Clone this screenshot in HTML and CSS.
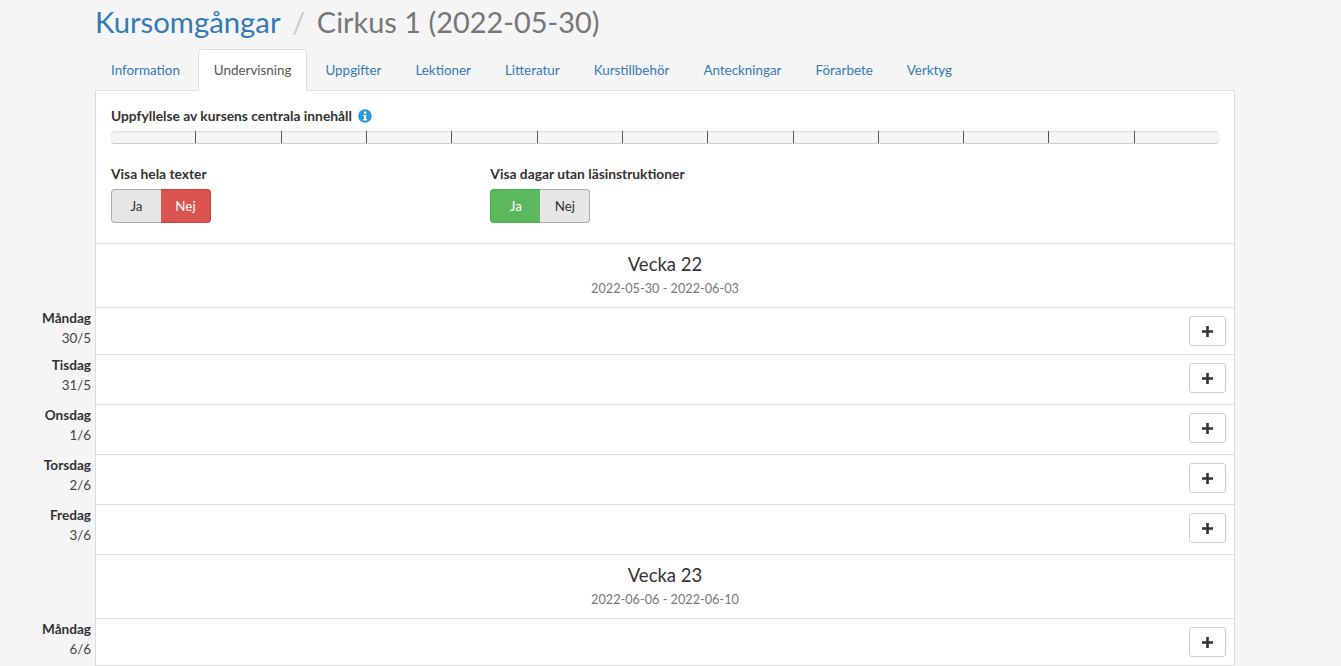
FILE: index.html
```html
<!DOCTYPE html>
<html lang="sv">
<head>
<meta charset="utf-8">
<title>Cirkus 1</title>
<link rel="stylesheet" href="styles.css">
</head>
<body>
<div class="page">
  <h1 class="title"><a href="#">Kursomgångar</a><span class="sep">/</span><span class="sub">Cirkus 1 (2022-05-30)</span></h1>
  <ul class="tabs">
    <li><a href="#">Information</a></li>
    <li class="active"><a href="#">Undervisning</a></li>
    <li><a href="#">Uppgifter</a></li>
    <li><a href="#">Lektioner</a></li>
    <li><a href="#">Litteratur</a></li>
    <li><a href="#">Kurstillbehör</a></li>
    <li><a href="#">Anteckningar</a></li>
    <li><a href="#">Förarbete</a></li>
    <li><a href="#">Verktyg</a></li>
  </ul>
  <section class="panel">
    <div class="label-line">
      <strong>Uppfyllelse av kursens centrala innehåll</strong>
      <svg class="info" viewBox="0 0 14 14" width="14" height="14" aria-hidden="true"><circle cx="7" cy="7" r="6.8" fill="#2b9bd3"/><rect x="5.9" y="2.6" width="2.3" height="2.1" rx=".4" fill="#fff"/><path d="M5.2 5.9h3v4.2h.8v1.3H5.2v-1.3H6V7.2h-.8z" fill="#fff"/></svg>
    </div>
    <div class="progress"><i></i><i></i><i></i><i></i><i></i><i></i><i></i><i></i><i></i><i></i><i></i><i></i><i></i></div>
    <div class="options">
      <div>
        <div class="opt-label">Visa hela texter</div>
        <div class="toggle"><span class="tbtn">Ja</span><span class="tbtn red">Nej</span></div>
      </div>
      <div>
        <div class="opt-label">Visa dagar utan läsinstruktioner</div>
        <div class="toggle"><span class="tbtn green">Ja</span><span class="tbtn">Nej</span></div>
      </div>
    </div>
  </section>
  <div class="week"><h2>Vecka 22</h2><small>2022-05-30 - 2022-06-03</small></div>
  <div class="day first"><div class="dlabel"><b>Måndag</b><span>30/5</span></div><div class="cell"><button class="add"><svg viewBox="0 0 11 11" width="11" height="11" aria-hidden="true"><path d="M4.2 0h2.6v4.2H11v2.6H6.8V11H4.2V6.8H0V4.2h4.2z"/></svg></button></div></div>
  <div class="day"><div class="dlabel"><b>Tisdag</b><span>31/5</span></div><div class="cell"><button class="add"><svg viewBox="0 0 11 11" width="11" height="11" aria-hidden="true"><path d="M4.2 0h2.6v4.2H11v2.6H6.8V11H4.2V6.8H0V4.2h4.2z"/></svg></button></div></div>
  <div class="day"><div class="dlabel"><b>Onsdag</b><span>1/6</span></div><div class="cell"><button class="add"><svg viewBox="0 0 11 11" width="11" height="11" aria-hidden="true"><path d="M4.2 0h2.6v4.2H11v2.6H6.8V11H4.2V6.8H0V4.2h4.2z"/></svg></button></div></div>
  <div class="day"><div class="dlabel"><b>Torsdag</b><span>2/6</span></div><div class="cell"><button class="add"><svg viewBox="0 0 11 11" width="11" height="11" aria-hidden="true"><path d="M4.2 0h2.6v4.2H11v2.6H6.8V11H4.2V6.8H0V4.2h4.2z"/></svg></button></div></div>
  <div class="day"><div class="dlabel"><b>Fredag</b><span>3/6</span></div><div class="cell"><button class="add"><svg viewBox="0 0 11 11" width="11" height="11" aria-hidden="true"><path d="M4.2 0h2.6v4.2H11v2.6H6.8V11H4.2V6.8H0V4.2h4.2z"/></svg></button></div></div>
  <div class="week"><h2>Vecka 23</h2><small>2022-06-06 - 2022-06-10</small></div>
  <div class="day first"><div class="dlabel"><b>Måndag</b><span>6/6</span></div><div class="cell"><button class="add"><svg viewBox="0 0 11 11" width="11" height="11" aria-hidden="true"><path d="M4.2 0h2.6v4.2H11v2.6H6.8V11H4.2V6.8H0V4.2h4.2z"/></svg></button></div></div>
</div>
</body>
</html>
```
FILE: styles.css
```css
* { box-sizing: border-box; }
html, body { height: 666px; overflow: hidden; }
body {
  margin: 0;
  background: #f5f5f5;
  color: #333;
  font-family: Lato, "Noto Sans", sans-serif;
  font-size: 13.4px;
  line-height: 20px;
}
.page { width: 1235px; padding-left: 95px; }
.title {
  margin: 0;
  height: 49px;
  padding-top: 2px;
  font-size: 29.3px;
  line-height: 40px;
  font-weight: 400;
  color: #777;
}
.title a { color: #337ab7; text-decoration: none; }
.sep { color: #ccc; padding: 0 11.5px; }
.sub { font-size: 28.9px; }
.tabs {
  display: flex;
  list-style: none;
  margin: 0;
  padding: 0;
  height: 42px;
  position: relative;
  z-index: 1;
}
.tabs a {
  display: block;
  height: 42px;
  padding: 10px 15px;
  color: #337ab7;
  text-decoration: none;
  border: 1px solid transparent;
  border-radius: 4px 4px 0 0;
}
.tabs li { margin-right: 2px; }
.tabs .active a { background: #fff; color: #555; border-color: #ddd #ddd #fff; }
.panel {
  background: #fff;
  border: 1px solid #ddd;
  height: 154px;
  padding: 15px;
  margin-top: -1px;
}
.label-line { display: flex; align-items: center; gap: 6px; height: 20px; }
.label-line strong, .opt-label { font-weight: 700; color: #333; font-size: 13.8px; }
.progress {
  display: flex;
  height: 13px;
  margin-top: 5px;
  background: #f5f5f5;
  border-radius: 4px;
  box-shadow: inset 0 1px 2px rgba(0,0,0,.1);
  border-bottom: 1px solid #ccc;
}
.progress i { flex: 1; border-left: 1px solid #555; }
.progress i:first-child { border-left: 0; }
.options { display: grid; grid-template-columns: repeat(3, 1fr); column-gap: 30px; margin-top: 20px; }
.opt-label { height: 20px; margin-bottom: 5px; }
.toggle { display: flex; width: 100px; height: 34px; }
.tbtn {
  width: 50px;
  text-align: center;
  line-height: 32px;
  background: #e6e6e6;
  border: 1px solid #adadad;
  color: #333;
}
.tbtn:first-child { border-radius: 4px 0 0 4px; border-right: 0; }
.tbtn:last-child { border-radius: 0 4px 4px 0; border-left: 0; }
.tbtn.red { background: #d9534f; border-color: #d43f3a; color: #fff; }
.tbtn.green { background: #5cb85c; border-color: #4cae4c; color: #fff; }
.week {
  background: #fff;
  height: 64px;
  border: 1px solid #ddd;
  border-top: 0;
  text-align: center;
  padding-top: 8px;
}
.week h2 { margin: 0; font-size: 18.5px; line-height: 24px; font-weight: 400; }
.week small { display: block; font-size: 12.7px; line-height: 20px; margin-top: 2px; color: #777; }
.day { display: flex; height: 50px; margin-left: -95px; }
.day.first { height: 47px; }
.dlabel {
  width: 95px;
  padding: 0 4px 0 0;
  text-align: right;
  flex: none;
}
.dlabel b, .dlabel span { display: block; }
.dlabel b { font-size: 13.6px; }
.dlabel span { color: #444; }
.cell {
  flex: 1;
  background: #fff;
  border: 1px solid #ddd;
  border-top: 0;
  display: flex;
  justify-content: flex-end;
  align-items: flex-start;
  padding: 8px 8px 0 0;
}
.add {
  display: flex;
  align-items: center;
  justify-content: center;
  width: 37px;
  height: 30px;
  padding: 0;
  background: #fff;
  border: 1px solid #ccc;
  border-radius: 3px;
}
.add svg { fill: #333; }
```
